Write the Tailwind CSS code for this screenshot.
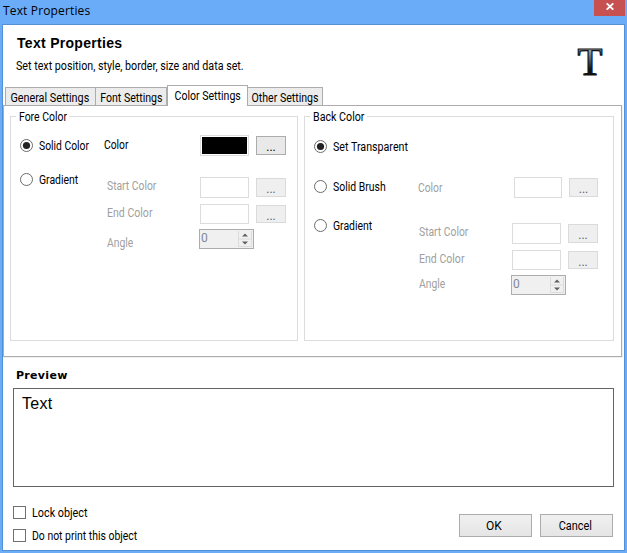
<!DOCTYPE html>
<html lang="en">
<head>
<meta charset="utf-8">
<title>Text Properties</title>
<script src="https://cdn.jsdelivr.net/npm/@tailwindcss/browser@4"></script>
</head>
<body class="w-[627px] h-[553px] overflow-hidden bg-[#6aacf7] font-['Roboto',sans-serif] text-[12px] leading-[14px] text-black whitespace-nowrap">
<div class="flex flex-col h-[553px]">
  <header class="flex justify-between h-[24px] pl-[3px] pr-[2px]">
    <h1 class="font-['Open_Sans',sans-serif] text-[12px] leading-[21px] tracking-[.15px]">Text Properties</h1>
    <button aria-label="Close" class="w-[31px] h-[16px] bg-[#c75050] flex items-center justify-center pb-[3px]">
      <svg width="8" height="7" viewBox="0 0 8 7"><path d="M.7 .3 7.3 6.7M7.3 .3 .7 6.7" stroke="#fff" stroke-width="1.8"/></svg>
    </button>
  </header>
  <main class="flex flex-col ml-[2px] w-[623px] h-[527px] border border-[#5490d3] bg-white">
    <section class="flex justify-between h-[60px] pl-[13px] pr-[19px]">
      <div class="pt-[10px]">
        <h2 class="font-['Liberation_Sans',sans-serif] font-bold text-[14px] leading-[16px] ml-px tracking-[.3px]">Text Properties</h2>
        <p class="mt-[8px] origin-left scale-x-[.892]">Set text position, style, border, size and data set.</p>
      </div>
      <svg class="mt-[14px]" width="30" height="44" viewBox="0 -6 30 44" aria-hidden="true">
        <defs><linearGradient id="t" x1="0" y1="0" x2="0" y2="1"><stop offset=".25" stop-color="#aaa"/><stop offset=".5" stop-color="#555"/><stop offset=".7" stop-color="#111"/></linearGradient></defs>
        <text x="2.5" y="29.5" font-family="Liberation Serif" font-size="41" textLength="25" lengthAdjust="spacingAndGlyphs" fill="url(#t)" stroke="#111" stroke-width="1.2">T</text>
      </svg>
    </section>
    <nav class="flex items-end h-[20px] pl-[2px]">
      <div class="w-[91px] h-[18px] border border-b-0 border-[#acacac] bg-[#ececec] flex items-center justify-center pt-[2px] pr-[2px]"><span class="scale-x-[.9]">General Settings</span></div>
      <div class="w-[71px] h-[18px] border border-l-0 border-b-0 border-[#acacac] bg-[#ececec] flex items-center justify-center pt-[2px]"><span class="scale-x-[.88]">Font Settings</span></div>
      <div class="w-[81px] h-[21px] -mb-px z-10 border border-b-0 border-[#acacac] bg-white flex items-center justify-center pb-[1px]"><span class="scale-x-[.88]">Color Settings</span></div>
      <div class="w-[75px] h-[18px] border border-l-0 border-b-0 border-[#acacac] bg-[#ececec] flex items-center justify-center pt-[2px]"><span class="scale-x-[.88]">Other Settings</span></div>
    </nav>
    <section class="flex gap-[6px] w-[619px] h-[252px] shrink-0 border border-[#acacac] shadow-[1px_1px_0_#f0f0f0] pl-[6px] pt-[10px]">
      <section class="w-[288px] h-[225px] border border-[#dcdcdc]">
        <h3 class="w-[53px] h-[14px] -mt-[7px] ml-[5px] pl-[3px] bg-white"><span class="inline-block origin-left scale-x-[.87]">Fore Color</span></h3>
        <div class="flex pl-[9px]">
          <div class="w-[84px] pt-[14px]">
            <label class="flex items-center h-[15px] gap-[6px]"><svg width="13" height="13"><circle cx="6.5" cy="6.5" r="6" fill="#fff" stroke="#6b6b6b"/><circle cx="6.5" cy="6.5" r="3.6" fill="#222"/></svg><span class="origin-left scale-x-[.86]">Solid Color</span></label>
            <label class="mt-[19px] flex items-center h-[15px] gap-[6px]"><svg width="13" height="13"><circle cx="6.5" cy="6.5" r="6" fill="#fff" stroke="#6b6b6b"/></svg><span class="origin-left scale-x-[.87]">Gradient</span></label>
          </div>
          <div class="pt-[11px] text-[#a0a0a0]">
            <div class="flex h-[21px] text-black"><span class="w-[96px] leading-[21px]"><span class="inline-block origin-left scale-x-[.86]">Color</span></span><i class="w-[49px] h-[21px] border border-[#dcdcdc] p-px"><b class="block size-full bg-black"></b></i><button class="ml-[7px] mt-px w-[30px] h-[19px] border border-[#acacac] bg-[#e9e9e9] leading-[20px]">...</button></div>
            <div class="mt-[21px] flex h-[21px]"><div class="w-[93px] ml-[3px] leading-[19px]"><span class="inline-block origin-left scale-x-[.86]">Start Color</span></div><i class="w-[49px] h-[21px] border border-[#dcdcdc]"></i><button class="ml-[7px] mt-px w-[30px] h-[19px] border border-[#dadada] bg-[#efefef] text-[#606060] leading-[20px]">...</button></div>
            <div class="mt-[6px] flex h-[20px]"><div class="w-[93px] ml-[3px] leading-[18px]"><span class="inline-block origin-left scale-x-[.88]">End Color</span></div><i class="w-[49px] h-[20px] border border-[#dcdcdc]"></i><button class="ml-[7px] mt-px w-[30px] h-[18px] border border-[#dadada] bg-[#efefef] text-[#606060] leading-[20px]">...</button></div>
            <div class="mt-[5px] flex h-[20px]"><div class="w-[92px] ml-[3px] leading-[28px]"><span class="inline-block origin-left scale-x-[.86]">Angle</span></div>
              <div class="flex justify-between w-[55px] h-[20px] border border-[#acacac] bg-[#f0f0f0] pl-[1px] pr-px pt-px pb-px"><span class="text-[#7f8894] leading-[15px]">0</span><svg width="14" height="16"><path d="M.5 0V15.5H13.5V0M.5 8H13.5" fill="none" stroke="#dcdcdc"/><path d="M4 5.5H10L7 2.5ZM4 10.5H10L7 13.5Z" fill="#606060"/></svg></div></div>
          </div>
        </div>
      </section>
      <section class="w-[310px] h-[225px] border border-[#dcdcdc]">
        <h3 class="w-[57px] h-[14px] -mt-[7px] ml-[5px] pl-[3px] bg-white"><span class="inline-block origin-left scale-x-[.89]">Back Color</span></h3>
        <div class="flex pl-[9px]">
          <div class="w-[104px] pt-[15px]">
            <label class="flex items-center h-[15px] gap-[6px]"><svg width="13" height="13"><circle cx="6.5" cy="6.5" r="6" fill="#fff" stroke="#6b6b6b"/><circle cx="6.5" cy="6.5" r="3.6" fill="#222"/></svg><span class="origin-left scale-x-[.89]">Set Transparent</span></label>
            <label class="mt-[25px] flex items-center h-[15px] gap-[6px]"><svg width="13" height="13"><circle cx="6.5" cy="6.5" r="6" fill="#fff" stroke="#6b6b6b"/></svg><span class="origin-left scale-x-[.87]">Solid Brush</span></label>
            <label class="mt-[24px] flex items-center h-[15px] gap-[6px]"><svg width="13" height="13"><circle cx="6.5" cy="6.5" r="6" fill="#fff" stroke="#6b6b6b"/></svg><span class="origin-left scale-x-[.87]">Gradient</span></label>
          </div>
          <div class="pt-[53px] text-[#a0a0a0]">
            <div class="flex h-[21px]"><div class="w-[96px] leading-[22px]"><span class="inline-block origin-left scale-x-[.86]">Color</span></div><i class="w-[48px] h-[21px] border border-[#dcdcdc]"></i><button class="ml-[7px] mt-px w-[29px] h-[19px] border border-[#dadada] bg-[#efefef] text-[#606060] leading-[20px]">...</button></div>
            <div class="mt-[25px] flex h-[21px]"><div class="w-[93px] ml-[1px] leading-[19px]"><span class="inline-block origin-left scale-x-[.86]">Start Color</span></div><i class="w-[49px] h-[21px] border border-[#dcdcdc]"></i><button class="ml-[7px] mt-px w-[30px] h-[19px] border border-[#dadada] bg-[#efefef] text-[#606060] leading-[20px]">...</button></div>
            <div class="mt-[6px] flex h-[20px]"><div class="w-[93px] ml-[1px] leading-[18px]"><span class="inline-block origin-left scale-x-[.88]">End Color</span></div><i class="w-[49px] h-[20px] border border-[#dcdcdc]"></i><button class="ml-[7px] mt-px w-[30px] h-[18px] border border-[#dadada] bg-[#efefef] text-[#606060] leading-[20px]">...</button></div>
            <div class="mt-[5px] flex h-[20px]"><div class="w-[92px] ml-[1px] leading-[18px]"><span class="inline-block origin-left scale-x-[.86]">Angle</span></div>
              <div class="flex justify-between w-[55px] h-[20px] border border-[#acacac] bg-[#f0f0f0] pl-[1px] pr-px pt-px pb-px"><span class="text-[#7f8894] leading-[15px]">0</span><svg width="14" height="16"><path d="M.5 0V15.5H13.5V0M.5 8H13.5" fill="none" stroke="#dcdcdc"/><path d="M4 5.5H10L7 2.5ZM4 10.5H10L7 13.5Z" fill="#606060"/></svg></div></div>
          </div>
        </div>
      </section>
    </section>
    <section class="pl-[10px] pt-[11px]">
      <h3 class="ml-[3px] font-['DejaVu_Sans',sans-serif] font-bold text-[11px] leading-[15px] tracking-[.3px]">Preview</h3>
      <div class="mt-[5px] w-[601px] h-[99px] border border-[#646464] pl-[8px] pt-[6px] font-['Liberation_Sans',sans-serif] text-[16px] leading-[18px] tracking-[.3px]">Text</div>
    </section>
    <footer class="flex justify-between pl-[10px] pr-[11px] pt-[18px]">
      <div class="flex flex-col gap-[9px]">
        <label class="flex items-center gap-[6px] h-[14px]"><i class="size-[13px] border border-[#707070]"></i><span class="pt-[2px] origin-left scale-x-[.9]">Lock object</span></label>
        <label class="flex items-center gap-[6px] h-[14px]"><i class="size-[13px] border border-[#707070]"></i><span class="pt-[2px] origin-left scale-x-[.87]">Do not print this object</span></label>
      </div>
      <div class="flex gap-[8px] mt-[9px]">
        <button class="w-[73px] h-[23px] border border-[#acacac] bg-linear-to-b from-[#f0f0f0] to-[#e5e5e5] pr-[3px]"><span class="inline-block">OK</span></button>
        <button class="w-[73px] h-[23px] border border-[#acacac] bg-linear-to-b from-[#f0f0f0] to-[#e5e5e5] pr-[3px]"><span class="inline-block scale-x-[.91]">Cancel</span></button>
      </div>
    </footer>
  </main>
</div>
</body>
</html>
